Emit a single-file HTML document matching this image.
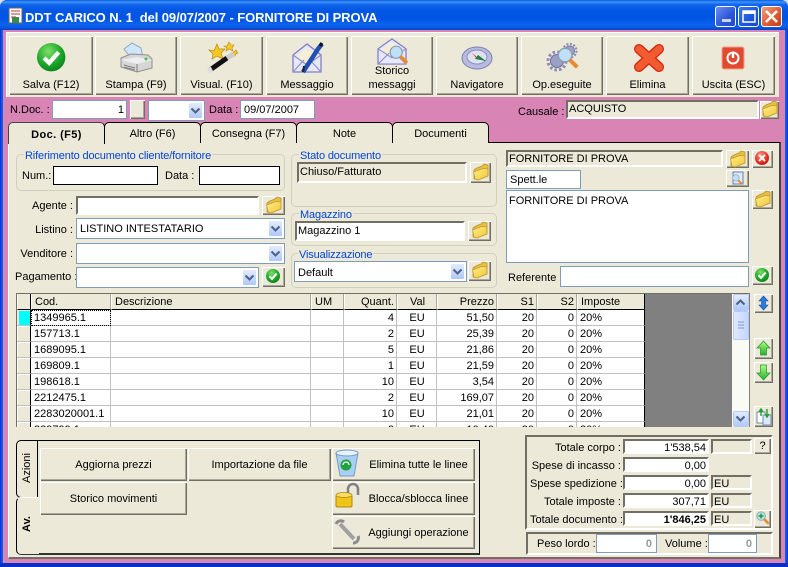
<!DOCTYPE html>
<html><head><meta charset="utf-8"><style>
html,body{margin:0;padding:0;background:#ddd}
#w{position:relative;width:788px;height:567px;overflow:hidden;font:11px/16px "Liberation Sans",sans-serif;color:#000}
#w div{position:absolute;box-sizing:border-box;white-space:nowrap}
.b{background:#ece9d8;box-shadow:inset 1px 1px 0 #fff,inset -1px -1px 0 #716f64,inset -2px -2px 0 #aca899;text-align:center}
.s{background:#ece9d8;border-top:2px solid #716f64;border-left:2px solid #716f64;border-right:2px solid #fff;border-bottom:2px solid #fff;padding-left:1px}
.i{background:#fff;border:1px solid #7f9db9;padding-left:3px}
.k{background:#fff;border:1px solid #000}
.a{background:linear-gradient(#e3ecfe,#afc8f8);border:1px solid #fff;border-radius:2px}
.g{border:1px solid #d0d0bf;border-radius:5px}
.l{color:#0046d5;background:#ece9d8;padding:0 1px;letter-spacing:-.15px}
.r{text-align:right}
.tb{background:#ece9d8;border:1px solid #000;border-bottom:0;border-radius:5px 5px 0 0;text-align:center;line-height:22px}
table{border-collapse:separate;border-spacing:0;table-layout:fixed;font:11px/14px "Liberation Sans",sans-serif}
td,th{box-sizing:border-box;height:16px;padding:0 2px 0 3px;border-right:1px solid #c0c0c0;border-bottom:1px solid #c0c0c0;font-weight:normal;overflow:hidden;white-space:nowrap;background:#fff;text-align:left}
th{background:#ece9d8;border-right:1px solid #aca899;border-left:1px solid #fff;border-bottom:1px solid #000;padding-left:3px;padding-top:1px;vertical-align:top}
td.n,th.n{text-align:right}
td.c,th.c{text-align:center}
td.h{background:#ece9d8;border-right:1px solid #000;border-bottom:1px solid #c0c0c0;padding:0;box-shadow:inset 1px 1px 0 #fff}
td.q{background:#00ffff;box-shadow:inset 2px 1px 0 #ece9d8}
th.h{border-right:1px solid #000;padding:0}
td.e{border-right:1px solid #000}
</style></head><body><div id="w">
<div style="left:0;top:0;width:788px;height:567px;background:#0a3fd8;border-radius:7px 7px 0 0"></div>
<div style="left:0;top:0;width:788px;height:30px;border-radius:7px 7px 0 0;background:linear-gradient(#0a5be0 0,#3d94fb 7%,#1469ee 14%,#0458e4 30%,#0054e3 60%,#0a63ee 82%,#0a56dd 93%,#0342c8 100%)"></div>
<div style="left:0;top:30px;width:3px;height:537px;background:linear-gradient(90deg,#0831d9,#166aee)"></div>
<div style="left:785px;top:30px;width:3px;height:537px;background:linear-gradient(90deg,#166aee,#0831d9)"></div>
<div style="left:0;top:563px;width:788px;height:4px;background:#0a2fc8"></div>
<div style="left:3px;top:30px;width:782px;height:533px;background:#d884b4"></div>
<div style="left:25px;top:10px;color:#fff;font:bold 13px/16px 'Liberation Sans',sans-serif;letter-spacing:-.09px;white-space:pre">DDT CARICO N. 1  del 09/07/2007 - FORNITORE DI PROVA</div>

<div style="left:715px;top:6px;width:21px;height:21px;border:1px solid #fff;border-radius:3px;background:linear-gradient(135deg,#6a8ff0,#2a55d8 60%,#2348c8)"></div>
<div style="left:738px;top:6px;width:21px;height:21px;border:1px solid #fff;border-radius:3px;background:linear-gradient(135deg,#3a7af0,#1c55e0 60%,#1a48d0)"></div>
<div style="left:761px;top:6px;width:21px;height:21px;border:1px solid #fff;border-radius:3px;background:linear-gradient(135deg,#f0a080,#e25a30 55%,#c83c14)"></div>

<div style="left:6px;top:32px;width:773px;height:65px;background:#ece9d8;box-shadow:inset 1px 1px 0 #fff"></div>
<div class="b" style="left:9px;top:36px;width:84px;height:59px;padding-top:41px">Salva (F12)</div>
<div class="b" style="left:95px;top:36px;width:82px;height:59px;padding-top:41px">Stampa (F9)</div>
<div class="b" style="left:180px;top:36px;width:83px;height:59px;padding-top:41px">Visual. (F10)</div>
<div class="b" style="left:266px;top:36px;width:82px;height:59px;padding-top:41px">Messaggio</div>
<div class="b" style="left:351px;top:36px;width:82px;height:59px;padding-top:28px;line-height:14px">Storico<br>messaggi</div>
<div class="b" style="left:436px;top:36px;width:82px;height:59px;padding-top:41px">Navigatore</div>
<div class="b" style="left:521px;top:36px;width:82px;height:59px;padding-top:41px">Op.eseguite</div>
<div class="b" style="left:606px;top:36px;width:83px;height:59px;padding-top:41px">Elimina</div>
<div class="b" style="left:692px;top:36px;width:83px;height:59px;padding-top:41px">Uscita (ESC)</div>

<div style="left:10px;top:102px">N.Doc. :</div>
<div class="i r" style="left:52px;top:100px;width:75px;height:19px;line-height:19px;padding-right:2px">1</div>
<div class="b" style="left:130px;top:100px;width:15px;height:19px"></div>
<div class="i" style="left:148px;top:100px;width:57px;height:21px"></div>
<div class="a" style="left:188px;top:102px;width:15px;height:17px"></div>
<div style="left:209px;top:102px">Data :</div>
<div class="i" style="left:240px;top:100px;width:75px;height:19px;line-height:19px">09/07/2007</div>
<div style="left:518px;top:104px">Causale :</div>
<div class="s" style="left:566px;top:100px;width:193px;height:19px;line-height:15px">ACQUISTO</div>
<div class="b" style="left:760px;top:101px;width:19px;height:18px"></div>

<div style="left:8px;top:142px;width:773px;height:417px;background:#ece9d8;border:1px solid #000;border-left:1px solid #fff;border-bottom:2px solid #716f64;border-right:2px solid #444"></div>
<div class="tb" style="left:104px;top:122px;width:97px;height:21px">Altro (F6)</div>
<div class="tb" style="left:200px;top:122px;width:97px;height:21px">Consegna (F7)</div>
<div class="tb" style="left:296px;top:122px;width:97px;height:21px">Note</div>
<div class="tb" style="left:392px;top:122px;width:97px;height:21px">Documenti</div>
<div class="tb" style="left:8px;top:122px;width:97px;height:22px;font-weight:bold;line-height:25px;letter-spacing:.4px;border-bottom:0;z-index:2;border-left-color:#444;border-top-color:#444">Doc. (F5)</div>

<div class="g" style="left:16px;top:154px;width:269px;height:37px"></div>
<div class="l" style="left:24px;top:148px">Riferimento documento cliente/fornitore</div>
<div style="left:22px;top:168px">Num.:</div>
<div class="k" style="left:53px;top:166px;width:105px;height:19px"></div>
<div style="left:165px;top:168px">Data :</div>
<div class="k" style="left:199px;top:166px;width:81px;height:19px"></div>

<div class="r" style="left:20px;top:198px;width:53px">Agente :</div>
<div class="s" style="left:76px;top:196px;width:183px;height:19px;background:#fff"></div>
<div class="b" style="left:262px;top:196px;width:23px;height:19px"></div>
<div class="r" style="left:20px;top:222px;width:53px">Listino :</div>
<div class="i" style="left:76px;top:218px;width:209px;height:21px;line-height:21px">LISTINO INTESTATARIO</div>
<div class="a" style="left:268px;top:220px;width:15px;height:17px"></div>
<div class="r" style="left:15px;top:246px;width:58px">Venditore :</div>
<div class="i" style="left:76px;top:243px;width:209px;height:21px"></div>
<div class="a" style="left:268px;top:245px;width:15px;height:17px"></div>
<div style="left:15px;top:269px">Pagamento :</div>
<div class="i" style="left:76px;top:267px;width:183px;height:21px"></div>
<div class="a" style="left:242px;top:269px;width:15px;height:17px"></div>
<div class="b" style="left:262px;top:267px;width:23px;height:20px"></div>

<div class="g" style="left:291px;top:154px;width:206px;height:53px"></div>
<div class="l" style="left:299px;top:148px">Stato documento</div>
<div class="s" style="left:297px;top:162px;width:170px;height:21px;line-height:16px">Chiuso/Fatturato</div>
<div class="b" style="left:470px;top:162px;width:21px;height:21px"></div>
<div class="g" style="left:291px;top:213px;width:206px;height:33px"></div>
<div class="l" style="left:299px;top:207px">Magazzino</div>
<div class="s" style="left:295px;top:221px;width:170px;height:20px;line-height:17px;background:#fff">Magazzino 1</div>
<div class="b" style="left:468px;top:221px;width:23px;height:20px"></div>
<div class="g" style="left:291px;top:253px;width:206px;height:35px"></div>
<div class="l" style="left:298px;top:247px">Visualizzazione</div>
<div class="i" style="left:294px;top:261px;width:173px;height:21px;line-height:22px">Default</div>
<div class="a" style="left:450px;top:263px;width:15px;height:17px"></div>
<div class="b" style="left:468px;top:261px;width:23px;height:20px"></div>

<div class="s" style="left:506px;top:150px;width:217px;height:17px;line-height:15px">FORNITORE DI PROVA</div>
<div class="b" style="left:726px;top:150px;width:23px;height:18px"></div>
<div class="b" style="left:752px;top:150px;width:21px;height:18px"></div>
<div class="i" style="left:506px;top:170px;width:75px;height:19px;line-height:19px">Spett.le</div>
<div class="b" style="left:726px;top:170px;width:23px;height:17px"></div>
<div class="i" style="left:506px;top:190px;width:243px;height:73px;padding-left:2px;line-height:20px">FORNITORE DI PROVA</div>
<div class="b" style="left:752px;top:190px;width:21px;height:19px"></div>
<div style="left:508px;top:270px">Referente</div>
<div class="i" style="left:560px;top:266px;width:189px;height:21px"></div>
<div class="b" style="left:752px;top:266px;width:21px;height:19px"></div>

<div style="left:16px;top:293px;width:734px;height:134px;background:#808080;border-top:1px solid #716f64;border-left:1px solid #716f64;overflow:hidden">
<table style="position:absolute;left:0;top:0;width:628px"><colgroup><col style="width:14px"><col style="width:80px"><col style="width:200px"><col style="width:33px"><col style="width:53px"><col style="width:40px"><col style="width:60px"><col style="width:40px"><col style="width:40px"><col style="width:68px"></colgroup>
<tr><th class="h"></th><th>Cod.</th><th>Descrizione</th><th>UM</th><th class="n">Quant.</th><th class="c">Val</th><th class="n">Prezzo</th><th class="n">S1</th><th class="n">S2</th><th style="border-right:1px solid #000">Imposte</th></tr>
<tr><td class="h q"></td><td style="outline:1px dotted #000;outline-offset:-1px">1349965.1</td><td></td><td></td><td class="n">4</td><td class="c">EU</td><td class="n">51,50</td><td class="n">20</td><td class="n">0</td><td class="e">20%</td></tr>
<tr><td class="h"></td><td>157713.1</td><td></td><td></td><td class="n">2</td><td class="c">EU</td><td class="n">25,39</td><td class="n">20</td><td class="n">0</td><td class="e">20%</td></tr>
<tr><td class="h"></td><td>1689095.1</td><td></td><td></td><td class="n">5</td><td class="c">EU</td><td class="n">21,86</td><td class="n">20</td><td class="n">0</td><td class="e">20%</td></tr>
<tr><td class="h"></td><td>169809.1</td><td></td><td></td><td class="n">1</td><td class="c">EU</td><td class="n">21,59</td><td class="n">20</td><td class="n">0</td><td class="e">20%</td></tr>
<tr><td class="h"></td><td>198618.1</td><td></td><td></td><td class="n">10</td><td class="c">EU</td><td class="n">3,54</td><td class="n">20</td><td class="n">0</td><td class="e">20%</td></tr>
<tr><td class="h"></td><td>2212475.1</td><td></td><td></td><td class="n">2</td><td class="c">EU</td><td class="n">169,07</td><td class="n">20</td><td class="n">0</td><td class="e">20%</td></tr>
<tr><td class="h"></td><td>2283020001.1</td><td></td><td></td><td class="n">10</td><td class="c">EU</td><td class="n">21,01</td><td class="n">20</td><td class="n">0</td><td class="e">20%</td></tr>
<tr><td class="h"></td><td>229799.1</td><td></td><td></td><td class="n">2</td><td class="c">EU</td><td class="n">10,40</td><td class="n">20</td><td class="n">0</td><td class="e">20%</td></tr>
</table>
</div>
<div style="left:732px;top:294px;width:17px;height:133px;background:#fbfbf6"></div>
<div class="a" style="left:733px;top:294px;width:16px;height:17px;border-color:#b6caf5"></div>
<div class="a" style="left:733px;top:311px;width:16px;height:29px;border-color:#b6caf5;background:linear-gradient(90deg,#dfe8fd,#c5d5fb)"></div>
<div class="a" style="left:733px;top:411px;width:16px;height:16px;border-color:#b6caf5"></div>
<div class="b" style="left:754px;top:294px;width:19px;height:19px"></div>
<div class="b" style="left:754px;top:338px;width:19px;height:21px"></div>
<div class="b" style="left:754px;top:362px;width:19px;height:21px"></div>
<div class="b" style="left:754px;top:406px;width:19px;height:21px"></div>

<div style="left:37px;top:440px;width:443px;height:115px;background:#ece9d8;border:1px solid #000;border-left:0;border-bottom:2px solid #333"></div>
<div style="left:16px;top:440px;width:22px;height:58px;background:#ece9d8;border:1px solid #000;border-radius:5px 0 0 5px"></div>
<div style="left:16px;top:497px;width:23px;height:58px;background:#ece9d8;border:1px solid #000;border-right:0;border-top-color:#fff;border-bottom-color:#333;border-radius:5px 0 0 5px"></div>
<div style="left:-2px;top:460px;width:58px;height:16px;text-align:center;transform:rotate(-90deg)">Azioni</div>
<div style="left:-2px;top:516px;width:58px;height:16px;text-align:center;transform:rotate(-90deg);font-weight:bold">Av.</div>
<div class="b" style="left:40px;top:448px;width:147px;height:33px;line-height:35px">Aggiorna prezzi</div>
<div class="b" style="left:188px;top:448px;width:143px;height:33px;line-height:35px">Importazione da file</div>
<div class="b" style="left:332px;top:448px;width:143px;height:33px;line-height:35px;padding-left:30px">Elimina tutte le linee</div>
<div class="b" style="left:40px;top:482px;width:147px;height:33px;line-height:35px">Storico movimenti</div>
<div class="b" style="left:332px;top:482px;width:143px;height:33px;line-height:35px;padding-left:30px">Blocca/sblocca linee</div>
<div class="b" style="left:332px;top:516px;width:143px;height:33px;line-height:35px;padding-left:30px">Aggiungi operazione</div>

<div style="left:525px;top:435px;width:248px;height:95px;border:2px solid;border-color:#716f64 #fff #fff #716f64"></div>
<div class="r" style="left:530px;top:440px;width:91px">Totale corpo :</div>
<div class="r" style="left:530px;top:458px;width:91px">Spese di incasso :</div>
<div class="r" style="left:530px;top:476px;width:91px">Spese spedizione :</div>
<div class="r" style="left:530px;top:494px;width:91px">Totale imposte :</div>
<div class="r" style="left:530px;top:512px;width:91px">Totale documento :</div>
<div class="s r" style="left:623px;top:439px;width:86px;height:15px;line-height:14px;background:#fff;padding-right:1px">1'538,54</div>
<div class="s r" style="left:623px;top:457px;width:86px;height:15px;line-height:14px;background:#fff;padding-right:1px">0,00</div>
<div class="s r" style="left:623px;top:475px;width:86px;height:15px;line-height:14px;background:#fff;padding-right:1px">0,00</div>
<div class="s r" style="left:623px;top:493px;width:86px;height:15px;line-height:14px;background:#fff;padding-right:1px">307,71</div>
<div class="s r" style="left:623px;top:511px;width:86px;height:15px;line-height:14px;background:#fff;padding-right:1px;font-weight:bold">1'846,25</div>
<div class="s" style="left:711px;top:439px;width:41px;height:15px"></div>
<div class="s" style="left:711px;top:475px;width:41px;height:15px;line-height:14px">EU</div>
<div class="s" style="left:711px;top:493px;width:41px;height:15px;line-height:14px">EU</div>
<div class="s" style="left:711px;top:511px;width:41px;height:15px;line-height:14px">EU</div>
<div class="b" style="left:754px;top:438px;width:17px;height:16px;line-height:17px">?</div>
<div class="b" style="left:754px;top:510px;width:17px;height:18px"></div>
<div style="left:526px;top:532px;width:247px;height:23px;border:2px solid;border-color:#716f64 #fff #fff #716f64"></div>
<div style="left:537px;top:536px">Peso lordo :</div>
<div class="i r" style="left:596px;top:534px;width:61px;height:19px;line-height:19px;color:#9a9a9a;padding-right:4px;font-weight:bold">0</div>
<div style="left:665px;top:536px">Volume :</div>
<div class="i r" style="left:708px;top:534px;width:49px;height:19px;line-height:19px;color:#9a9a9a;padding-right:4px;font-weight:bold">0</div>

<svg style="position:absolute;left:0;top:0;pointer-events:none" width="788" height="567" viewBox="0 0 788 567">
<defs>
<radialGradient id="gr" cx=".4" cy=".3" r=".8"><stop offset="0" stop-color="#7fe06a"/><stop offset=".55" stop-color="#1fa82a"/><stop offset="1" stop-color="#067a18"/></radialGradient>
<radialGradient id="rd" cx=".4" cy=".3" r=".8"><stop offset="0" stop-color="#ff9a80"/><stop offset=".6" stop-color="#ea3020"/><stop offset="1" stop-color="#b01010"/></radialGradient>
<linearGradient id="fy" x1="0" y1="0" x2="1" y2="1"><stop offset="0" stop-color="#ffef90"/><stop offset="1" stop-color="#f2c430"/></linearGradient>
<linearGradient id="gn" x1="0" y1="0" x2="0" y2="1"><stop offset="0" stop-color="#a8ff80"/><stop offset="1" stop-color="#28b030"/></linearGradient>
<g id="fo"><path d="M1 6 L1 15 L5 16 L15 12 L15 1 L11 0 L9 2 L4 4 Z" fill="#e8c040" stroke="#b8922c" stroke-width=".8"/><path d="M0.5 8 L10 4.5 L15 5 L15 12 L5 16 L2 15 Z" fill="url(#fy)" stroke="#c09a30" stroke-width=".8"/></g>
<g id="ck"><circle cx="10" cy="10" r="10" fill="url(#gr)"/><path d="M5 10.5 L8.600 14 L15.200 6.500" fill="none" stroke="#fff" stroke-width="3"/></g>
<g id="dn"><path d="M-.5 -.5 L3.500 3.500 L7.500 -.5" fill="none" stroke="#4d6185" stroke-width="2"/></g>
<g id="mg"><circle cx="6" cy="6" r="5" fill="#bfe0f8" stroke="#8aa0b0" stroke-width="1"/><path d="M9.500 9.500 L15 15" stroke="#e88a30" stroke-width="3"/></g>
<g id="env"><path d="M1 12 L15 1 L29 12 L29 29 L1 29 Z" fill="#e8e8fb" stroke="#7f7fc8" stroke-width="1.300"/><path d="M4 13 L15 5 L26 13 L15 21 Z" fill="#f6eed4"/><path d="M1 29 L12 17 M29 29 L18 17 M1 12 L15 22 L29 12" fill="none" stroke="#8f8fd0" stroke-width="1.200"/></g>
<g id="gear"><circle cx="9" cy="9" r="6.500" fill="#9ca0c8" stroke="#6a6e98"/><circle cx="9" cy="9" r="9" fill="none" stroke="#8a8eb8" stroke-width="3" stroke-dasharray="2.600 2.100"/></g>
</defs>

<rect x="722" y="19" width="9" height="3" fill="#fff" opacity=".75"/>
<rect x="743" y="11" width="12" height="11" fill="none" stroke="#fff" stroke-width="1.500"/><rect x="743" y="11" width="12" height="3" fill="#fff"/>
<path d="M766 11 L777 22 M777 11 L766 22" stroke="#fff" stroke-width="2.600"/>
<g transform="translate(9,8)"><rect width="13" height="15" fill="#fff" stroke="#666"/><path d="M2 3h9M2 6h9M2 9h5" stroke="#c03030"/><rect x="3" y="9" width="7" height="6" fill="#3a8a50"/></g>

<use href="#ck" transform="translate(37,43) scale(1.42)"/>
<path d="M124 49 L132 43 L141 48 L143 58 L131 58 Z" fill="#d0e6fa" stroke="#90a8c0"/>
<path d="M121 58 L131 54 L148 55 L152 59 L152 68 L137 72 L121 67 Z" fill="#d6d6d6" stroke="#8f8f8f"/>
<path d="M121 60 L137 64 L152 60 L137 57 Z" fill="#eeeeee"/><path d="M137 64 V72 M124 65 L135 68 M124 67 L135 70" stroke="#808080"/>
<circle cx="146" cy="59" r="1.500" fill="#40c050"/>
<path d="M214 51 L217 44 L219 49 L225 49 L221 53 L223 59 L217 56 L212 59 L213 54 L209 50 Z" fill="#f8c820" stroke="#b88810" stroke-width=".7"/>
<path d="M227 46 L229 42 L231 45 L234 45 L232 48 L233 51 L229 49 L226 51 L227 48 L224 46 Z" fill="#f8c820" stroke="#b88810" stroke-width=".6"/>
<path d="M234 52 L236 50 L237 52 L238 53 L236 54 L235 56 L233 54 L231 53 Z" fill="#f8c820" stroke="#b88810" stroke-width=".6"/>
<path d="M210 70 L227 58" stroke="#111" stroke-width="5"/><path d="M227 58 L234 54" stroke="#ccc" stroke-width="5"/><path d="M208 71 L212 69" stroke="#ddd" stroke-width="5"/>

<use href="#env" transform="translate(292,43)"/>
<path d="M303 72 L318 49 L322 44" stroke="#2050b0" stroke-width="4.500" fill="none"/><path d="M320 46 L322 43" stroke="#111" stroke-width="3"/><path d="M303 72 L304 66" stroke="#222" stroke-width="2"/>
<use href="#env" transform="translate(377,38) scale(1,.9)"/>
<use href="#mg" transform="translate(389,45) scale(1.200)"/>

<ellipse cx="477" cy="58" rx="15" ry="11" fill="#b8bce0" stroke="#7c80b0"/><ellipse cx="477" cy="57" rx="10" ry="7" fill="#dfe0f0" stroke="#8a8ec0"/>
<path d="M472 53 L478 58 L486 61 L477 59 Z" fill="#e03020"/><path d="M478 55 L486 61 L475 59 Z" fill="#208040"/>

<use href="#gear" transform="translate(548,52)"/><use href="#gear" transform="translate(563,44) scale(.75)"/>
<use href="#mg" transform="translate(557,47) scale(1.350)"/>

<path d="M639 49 L659 67 M659 49 L639 67" stroke="#d02810" stroke-width="10" stroke-linecap="round"/>
<path d="M639 49 L659 67 M659 49 L639 67" stroke="#f25a30" stroke-width="7.500" stroke-linecap="round"/>
<rect x="722" y="47" width="22" height="22" rx="2" fill="#e24a30" stroke="#f0a090"/>
<circle cx="733" cy="58" r="5.500" fill="none" stroke="#fff" stroke-width="2"/><path d="M733 53 V58" stroke="#fff" stroke-width="2.500"/>

<use href="#dn" x="192" y="109"/>
<use href="#dn" x="272" y="227"/><use href="#dn" x="272" y="252"/><use href="#dn" x="246" y="276"/><use href="#dn" x="454" y="270"/>
<use href="#dn" transform="translate(737,304) scale(1,-1)"/><use href="#dn" x="737" y="417"/>
<path d="M738 322h6M738 325h6M738 328h6" stroke="#7e9ad8"/>

<use href="#fo" x="762" y="101"/><use href="#fo" x="266" y="197"/><use href="#fo" x="473" y="164"/><use href="#fo" x="472" y="222"/><use href="#fo" x="472" y="262"/><use href="#fo" x="730" y="151"/><use href="#fo" x="755" y="191"/>
<use href="#ck" transform="translate(266,269) scale(.7)"/><use href="#ck" transform="translate(755,268) scale(.7)"/>
<circle cx="762" cy="158" r="7" fill="url(#rd)"/><path d="M759 155 L765 161 M765 155 L759 161" stroke="#fff" stroke-width="2"/>
<path d="M733 172 H743 V184 H733 Z" fill="#dde8fa" stroke="#6a80b0"/><use href="#mg" transform="translate(732,174) scale(.65)"/>

<path d="M763.500 296 L768 301 H765.500 V305 H768 L763.500 310 L759 305 H761.500 V301 H759 Z" fill="#2a7ae0" stroke="#1050a0" stroke-width=".6"/>
<path d="M763.500 341 L770 348 H766.500 V355 H760.500 V348 H757 Z" fill="url(#gn)" stroke="#28902a" stroke-width=".7"/>
<path d="M763.500 380 L770 373 H766.500 V365 H760.500 V373 H757 Z" fill="url(#gn)" stroke="#28902a" stroke-width=".7"/>
<rect x="757" y="412" width="8" height="11" fill="#fff" stroke="#7088b0"/><rect x="763" y="415" width="8" height="10" fill="#dce8fa" stroke="#7088b0"/>
<path d="M761 416 V410 M759 412 L761 409 L763 412 M767 409 V416 M765 414 L767 417 L769 414" stroke="#20a030" stroke-width="1.400" fill="none"/>

<path d="M336 453 L358 453 L354 476 L340 476 Z" fill="#a8d0f4" stroke="#7a9cc0"/><ellipse cx="347" cy="453" rx="11" ry="3" fill="#e6f2fc" stroke="#7a9cc0"/>
<circle cx="346" cy="465" r="5.500" fill="#20a040"/><path d="M343 465 A3 3 0 1 1 349 465" fill="none" stroke="#fff" stroke-width="1.300"/>
<rect x="336" y="495" width="16" height="12" rx="1.500" fill="#f0c418" stroke="#b08a10"/><ellipse cx="344" cy="495" rx="8" ry="2.500" fill="#f8de60" stroke="#b08a10" stroke-width=".7"/>
<path d="M348 493 V489 A5 5 0 0 1 358 489 V495" fill="none" stroke="#808080" stroke-width="2.500"/>
<path d="M340 524 L354 539" stroke="#a0a0a0" stroke-width="4" fill="none"/><path d="M336 524 A5 5 0 0 1 344 522 M353 543 A5 5 0 0 0 358 536" stroke="#8c8c8c" stroke-width="3" fill="none"/>
<g transform="translate(756,511)"><use href="#mg" transform="scale(.85)"/><path d="M5 2.500 V7.500 M2.500 5 H7.500" stroke="#10a020" stroke-width="1.400"/></g>
</svg>
</div></body></html>
